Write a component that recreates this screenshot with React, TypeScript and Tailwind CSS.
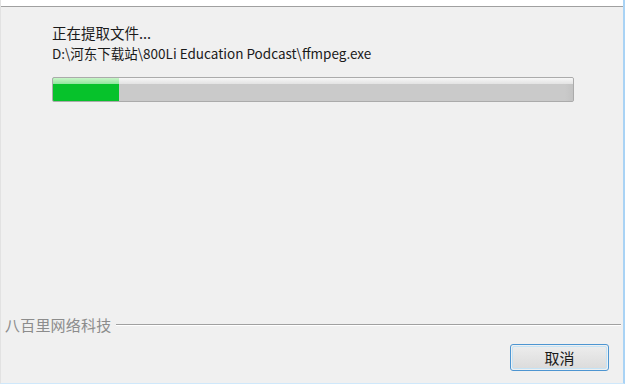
import React from "react";

const cjk = { fontFamily: '"Microsoft YaHei", "Noto Sans CJK SC", "Noto Sans", sans-serif' };

export default function App() {
  return (
    <div
      className="w-[625px] h-[384px] bg-[#f0f0f0] flex flex-col border-r-2 border-b border-l border-r-[#a9d3f5] border-b-[#cfe8fb] border-l-[#e2e2e2] overflow-hidden"
      style={cjk}
    >
      <div className="h-[7px] bg-white border-b border-[#a0a0a0] shrink-0" />
      <div className="pl-[51px] pt-[16px] flex flex-col">
        <div className="h-[20px] leading-[20px] text-[14.5px] text-[#1a1a1a]">正在提取文件...</div>
        <div className="h-[20px] leading-[20px] text-[13.5px] text-[#1a1a1a]">
          D:\河东下载站\800Li Education Podcast\ffmpeg.exe
        </div>
        <div className="mt-[14px] w-[522px] h-[25px] rounded-[2px] border border-[#ababab] bg-[#cacaca] flex overflow-hidden relative">
          <div className="absolute left-0 right-0 top-0 h-[6px] bg-gradient-to-b from-[#f7f7f7] to-[#e3e3e3]" />
          <div className="relative w-[66px] h-full bg-[#06c22b] flex flex-col">
            <div className="h-[6px] bg-gradient-to-b from-[#c8f5c8] to-[#8fe69d]" />
          </div>
          <div className="absolute right-0 top-[6px] bottom-0 w-[8px] bg-gradient-to-r from-[#cacaca] to-[#c3c3c3]" />
        </div>
      </div>
      <div className="mt-[213px] h-[20px] flex items-center pl-[4px] pr-[2px]">
        <span className="text-[15px] leading-[20px] text-[#8c8c8c] tracking-[0.2px]">八百里网络科技</span>
        <div className="flex-1 ml-[5px] flex flex-col">
          <div className="h-px bg-[#a0a0a0]" />
          <div className="h-px bg-white" />
        </div>
      </div>
      <div className="mt-[9px] flex justify-end pr-[14px]">
        <div className="w-[99px] h-[27px] rounded-[3px] border border-[#4d95d1] p-px">
          <div className="w-full h-full rounded-[2px] border border-[#c4e3f6] bg-gradient-to-b from-[#ececec] to-[#dcdcdc] flex items-center justify-center text-[15px] text-[#1a1a1a] leading-none">
            取消
          </div>
        </div>
      </div>
    </div>
  );
}
